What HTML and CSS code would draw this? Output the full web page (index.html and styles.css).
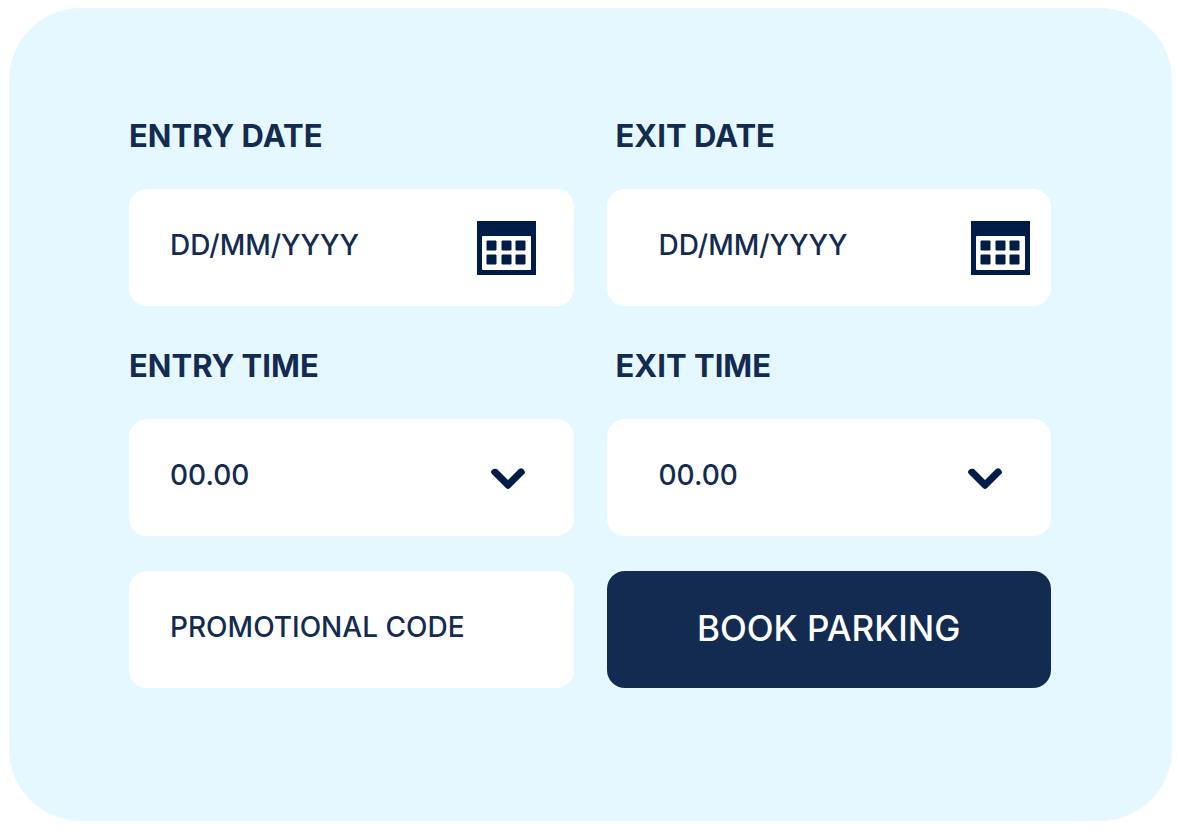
FILE: index.html
```html
<!DOCTYPE html>
<html lang="en">

<head>
  <meta charset="utf-8">
  <meta name="viewport" content="width=device-width, initial-scale=1">
  <link rel="stylesheet" href="styles.css">
  <title>Book Parking</title>
</head>

<body>
  <form class="booking">
    <div class="field">
      <label class="field-label" for="entryDate">ENTRY DATE</label>
      <div class="control">
        <input class="box" type="text" id="entryDate" placeholder="DD/MM/YYYY">
        <button class="calendar" type="button" aria-label="Choose entry date">
          <svg width="59" height="54" viewBox="0 0 59 54">
            <path fill="#001c47" d="M0 0h59v54H0z" />
            <rect x="5" y="15" width="49" height="34" rx="1" fill="#fff" />
            <path fill="#001c47" stroke="#001c47" stroke-linejoin="round" d="M10 20h9v9h-9zM25 20h9v9h-9zM39 20h9v9h-9zM10 34h9v9h-9zM25 34h9v9h-9zM39 34h9v9h-9z" />
          </svg>
        </button>
      </div>
    </div>

    <div class="field exit">
      <label class="field-label" for="exitDate">EXIT DATE</label>
      <div class="control">
        <input class="box" type="text" id="exitDate" placeholder="DD/MM/YYYY">
        <button class="calendar" type="button" aria-label="Choose exit date">
          <svg width="59" height="54" viewBox="0 0 59 54">
            <path fill="#001c47" d="M0 0h59v54H0z" />
            <rect x="5" y="15" width="49" height="34" rx="1" fill="#fff" />
            <path fill="#001c47" stroke="#001c47" stroke-linejoin="round" d="M10 20h9v9h-9zM25 20h9v9h-9zM39 20h9v9h-9zM10 34h9v9h-9zM25 34h9v9h-9zM39 34h9v9h-9z" />
          </svg>
        </button>
      </div>
    </div>

    <div class="field">
      <label class="field-label" for="entryTime">ENTRY TIME</label>
      <div class="control">
        <select class="box" id="entryTime">
          <option>00.00</option>
        </select>
        <svg class="chevron" width="34" height="22" viewBox="0 0 34 22">
          <path fill="#001c47" d="M1 6Q-1 4 1 2T6 1L17 12L28 1Q31 -1 33 2T33 6L19 20Q17 22 15 20Z" />
        </svg>
      </div>
    </div>

    <div class="field exit">
      <label class="field-label" for="exitTime">EXIT TIME</label>
      <div class="control">
        <select class="box" id="exitTime">
          <option>00.00</option>
        </select>
        <svg class="chevron" width="34" height="22" viewBox="0 0 34 22">
          <path fill="#001c47" d="M1 6Q-1 4 1 2T6 1L17 12L28 1Q31 -1 33 2T33 6L19 20Q17 22 15 20Z" />
        </svg>
      </div>
    </div>

    <input class="box" type="text" id="promoCode" aria-label="Promotional code" placeholder="PROMOTIONAL CODE">
    <button class="book" type="submit">BOOK PARKING</button>
  </form>
</body>

</html>
```
FILE: styles.css
```css
* {
  box-sizing: border-box;
}

body {
  margin: 8px 5px 10px 9px;
  background: #fff;
  color: #132b50;
  font-family: Inter, "Open Sans", sans-serif;
}

.booking {
  display: grid;
  grid-template-columns: 1fr 1fr;
  gap: 35px 33px;
  padding: 103px 121px 133px 120px;
  background: #e6f8ff;
  border-radius: 72px;
}

.field-label {
  display: block;
  margin-bottom: 28px;
  font-size: 31px;
  font-weight: 700;
  line-height: 50px;
}

.exit .field-label {
  padding-left: 9px;
}

.control {
  position: relative;
}

.box {
  display: block;
  width: 100%;
  height: 117px;
  padding: 0 90px 6px 41px;
  border: none;
  border-radius: 18px;
  outline: none;
  appearance: none;
  background: #fff;
  color: #132b50;
  font-family: inherit;
  font-size: 28px;
  font-weight: 500;
}

.exit .box {
  padding-left: 52px;
}

.box::placeholder {
  color: #132b50;
  opacity: 1;
}

#promoCode {
  padding-right: 41px;
}

.box:focus {
  box-shadow: 0 0 0 3px #132b50;
}

/* icons sit on top of the input and the select */
.calendar {
  position: absolute;
  top: 32px;
  right: 38px;
  padding: 0;
  border: none;
  background: none;
  cursor: pointer;
}

.calendar svg {
  display: block;
}

.exit .calendar {
  right: 21px;
}

.chevron {
  position: absolute;
  top: 49px;
  right: 49px;
  pointer-events: none;
}

.book {
  height: 117px;
  padding: 0 20px 4px;
  border: none;
  border-radius: 18px;
  background: #132b50;
  color: #fff;
  font-family: inherit;
  font-size: 35px;
  font-weight: 500;
  cursor: pointer;
}

.book:hover {
  background: #001c47;
}

@media (max-width: 800px) {
  .booking {
    grid-template-columns: 1fr;
    padding: 40px;
  }
}
```
